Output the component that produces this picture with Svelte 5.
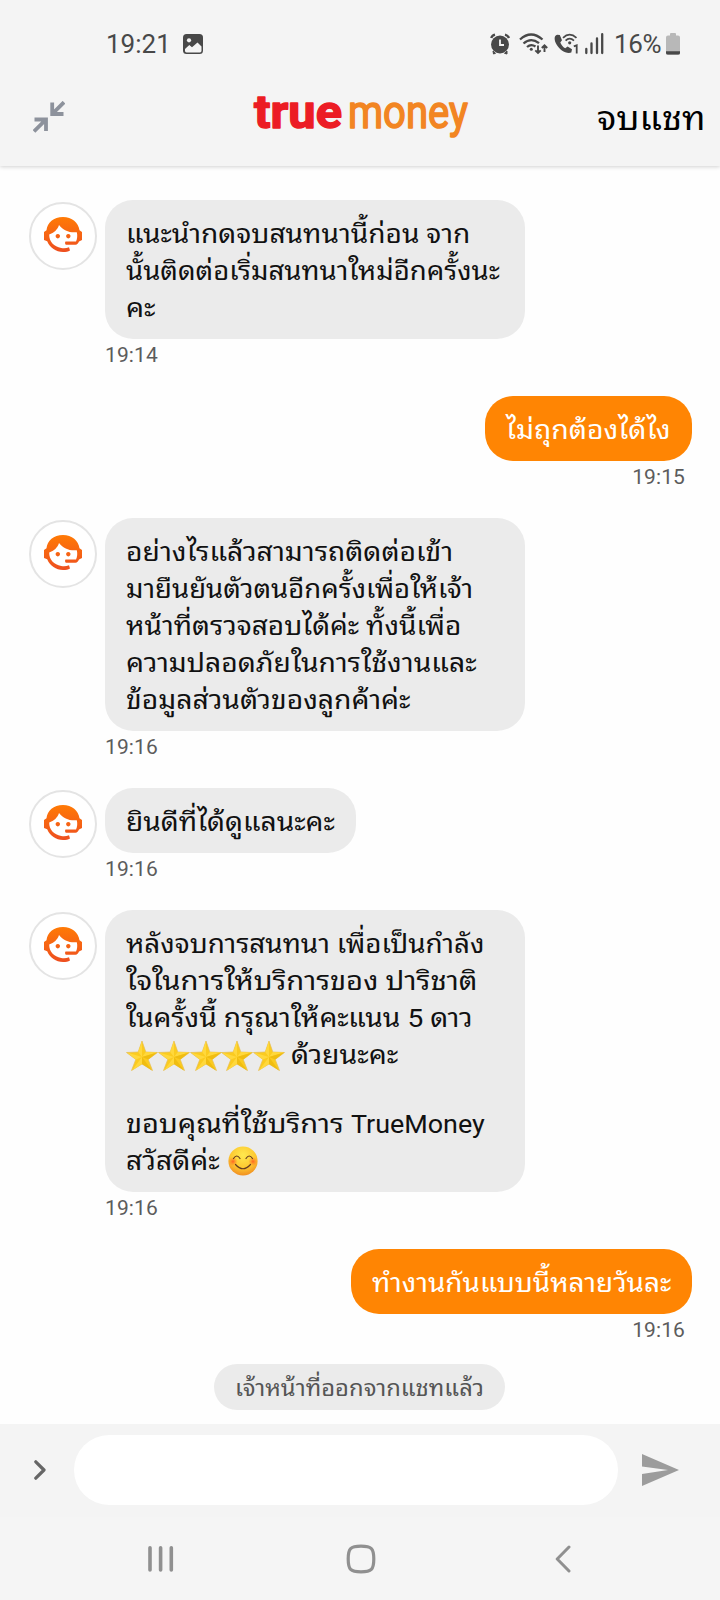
<script lang="ts">
  type Line = { text: string; width: number; latin?: string; latinWidth?: number; stars?: number; smile?: boolean };
  type Message = { id: number; from: 'agent' | 'me'; time: string; lines: (Line | null)[] };

  const messages: Message[] = [
    {
      id: 1,
      from: 'agent',
      time: '19:14',
      lines: [
        { text: 'แนะนำกดจบสนทนานี้ก่อน จาก', width: 344 },
        { text: 'นั้นติดต่อเริ่มสนทนาใหม่อีกครั้งนะ', width: 374 },
        { text: 'คะ', width: 30 },
      ],
    },
    { id: 2, from: 'me', time: '19:15', lines: [{ text: 'ไม่ถุกต้องได้ไง', width: 165 }] },
    {
      id: 3,
      from: 'agent',
      time: '19:16',
      lines: [
        { text: 'อย่างไรแล้วสามารถติดต่อเข้า', width: 327 },
        { text: 'มายืนยันตัวตนอีกครั้งเพื่อให้เจ้า', width: 347 },
        { text: 'หน้าที่ตรวจสอบได้ค่ะ ทั้งนี้เพื่อ', width: 335 },
        { text: 'ความปลอดภัยในการใช้งานและ', width: 351 },
        { text: 'ข้อมูลส่วนตัวของลูกค้าค่ะ', width: 285 },
      ],
    },
    { id: 4, from: 'agent', time: '19:16', lines: [{ text: 'ยินดีที่ได้ดูแลนะคะ', width: 209 }] },
    {
      id: 5,
      from: 'agent',
      time: '19:16',
      lines: [
        { text: 'หลังจบการสนทนา เพื่อเป็นกำลัง', width: 358 },
        { text: 'ใจในการให้บริการของ ปาริชาติ', width: 351 },
        { text: 'ในครั้งนี้ กรุณาให้คะแนน 5 ดาว', width: 347 },
        { text: 'ด้วยนะคะ', width: 107, stars: 5 },
        null,
        { text: 'ขอบคุณที่ใช้บริการ', width: 218, latin: 'TrueMoney', latinWidth: 134 },
        { text: 'สวัสดีค่ะ', width: 94, smile: true },
      ],
    },
    { id: 6, from: 'me', time: '19:16', lines: [{ text: 'ทำงานกันแบบนี้หลายวันละ', width: 299 }] },
  ];

  // squeezes or widens a line so it fills the width given for it
  function fit(node: HTMLElement, width: number) {
    const natural = node.scrollWidth;
    if (natural > 0) {
      node.style.transform = `scaleX(${width / natural})`;
    }
    node.style.width = `${width}px`;
  }
</script>

<div class="screen">
  <div class="status">
    <span class="clock">19:21</span>
    <svg class="photo" width="20" height="20" viewBox="0 0 20 20">
      <rect width="20" height="20" rx="3.5" fill="#484848" />
      <circle cx="6" cy="6.3" r="2.1" fill="#f4f4f4" />
      <path d="M2 15 L6.3 11 L9 13.3 L14.5 8.6 L18.5 12.5 V17 Q18.3 18.3 17 18.5 H3.5 Q2 18.3 2 17 Z" fill="#f4f4f4" />
    </svg>
    <svg class="indicators" width="116" height="24" viewBox="0 0 116 24">
      <g fill="#484848">
        <circle cx="10" cy="12.5" r="9" />
        <path d="M3 19 L5.5 21.3 L3.5 22 Z M17 19 L14.5 21.3 L17 22 Z" stroke="#484848" />
      </g>
      <path d="M1.2 6 Q2 3.4 5 2.6 M19 6 Q18 3.4 15 2.6" fill="none" stroke="#484848" stroke-width="2.3" />
      <path d="M10 7.5 V13 H14" fill="none" stroke="#f4f4f4" stroke-width="1.8" />
      <g fill="none" stroke="#484848" stroke-width="2.3">
        <path d="M30 7.5 Q41 -2.5 52.5 7.5" />
        <path d="M33.5 11.5 Q41 4.8 49 11.2" />
        <path d="M37 15 Q41 11.5 45.5 14.5" />
        <path d="M48 13.5 V21 M45.3 18.3 L48 21 L50.7 18.3 M54.5 20 V14 M51.8 16 L54.5 13.3 L57.2 16" stroke-width="1.9" />
      </g>
      <circle cx="41.3" cy="17.3" r="1.5" fill="#484848" />
      <path d="M67.2 2.7 C63.8 3.5 64 8.2 66.7 12.7 C69.6 17.6 75.8 22.3 81.3 20.6 L82 17.3 L77.6 14.4 L75.2 16.2 C72.8 14.7 71.4 13 70.3 10.4 L72 8.2 L69.8 3 Z" fill="#484848" />
      <g fill="none" stroke="#484848" stroke-width="1.8">
        <path d="M73 5.8 Q79.5 -0.5 86.5 5.8" />
        <path d="M75.6 8.7 Q79.5 4.7 84 8.6" />
        <path d="M83.8 14.3 L86.7 13.2 V21.5" />
      </g>
      <circle cx="79.7" cy="10.8" r="1.6" fill="#484848" />
      <path d="M96.3 17 V21 M101.5 11.5 V21 M107 6.5 V21 M112.2 2.2 V21" stroke="#484848" stroke-width="2.3" stroke-linecap="round" />
    </svg>
    <span class="percent">16%</span>
    <svg width="14" height="22" viewBox="0 0 14 22">
      <path d="M4 1 Q4 0 5 0 H9 Q10 0 10 1 V2.5 H12 Q14 2.5 14 4.5 V20 Q14 22 12 22 H2 Q0 22 0 20 V4.5 Q0 2.5 2 2.5 H4 Z" fill="#b8b8b8" />
      <path d="M0 18.3 H14 V20 Q14 21.5 12 21.5 H2 Q0 21.5 0 20 Z" fill="#484848" />
    </svg>
  </div>

  <header>
    <svg class="collapse" width="32" height="32" viewBox="0 0 32 32" fill="none" stroke="#8d929c" stroke-width="3.8">
      <path d="M19.2 1.5 V13 H30.5 M19.6 12.6 L31 1.2" />
      <path d="M1.5 18.5 H13 V30 M12.6 18.9 L1 30.4" />
    </svg>
    <svg class="logo" width="220" height="48" viewBox="0 0 220 48">
      <text x="2" y="32" class="true" textLength="88" lengthAdjust="spacingAndGlyphs">true</text>
      <text x="96" y="32" class="money" textLength="120" lengthAdjust="spacingAndGlyphs">money</text>
    </svg>
    <span class="end"><span class="fit" use:fit={109}>จบแชท</span></span>
  </header>

  <main>
    {#each messages as message (message.id)}
      <section class="message {message.from}">
        {#if message.from === 'agent'}
          <div class="avatar">
            <svg width="38" height="36" viewBox="0 0 38 36">
              <defs>
                <linearGradient id="hair-{message.id}" x1="0" y1="0" x2="0" y2="1">
                  <stop offset="0" stop-color="#ff7a05" />
                  <stop offset="1" stop-color="#ee4f20" />
                </linearGradient>
              </defs>
              <path
                d="M19 0 C9.5 0 3.3 5.8 2.5 13.2 L0 15 V23 L3.2 24.3 C6 31 12 35 19 35 C22 35 24.2 34.4 26 33.4 L25 30.2 C22.5 31.3 20 31.5 17.2 31 C10 29.8 5 24.5 5.2 17.5 C10 16 13.6 12.5 15 8 C19.5 13.5 25.5 16 32.8 15.2 C33.6 18.5 33.3 21.7 32 24.5 H21.5 C20.8 25.5 21 26.8 21.8 27.8 H31.5 C33.2 27.8 34.2 26.4 35 24.5 L38 23 V15 L35.5 13.2 C34.5 5.5 28 0 19 0 Z M13.8 17 a2.2 2.2 0 1 0 .01 0 Z M24.3 17 a2.2 2.2 0 1 0 .01 0 Z"
                fill="url(#hair-{message.id})"
              />
            </svg>
          </div>
        {/if}
        <div class="body">
          <div class="bubble">
            {#each message.lines as line}
              {#if line}
                <div class="line">
                  {#if line.stars}
                    {#each Array(line.stars) as _}
                      <svg class="star" width="32" height="32" viewBox="0 0 32 32">
                        <path d="M16 1 L19.8 12 L31.5 12.5 L22.2 19.4 L26.5 30.5 L16 24 L5.5 30.5 L9.8 19.4 L.5 12.5 L12.2 12 Z" fill="#fbcb1f" stroke="#e5bd55" stroke-width=".7" />
                        <path d="M16 1 V17 L12.2 12 Z M1 12.5 L16 17 L9.8 19.4 Z M16 17 V24 L6 30.5 Z M31 12.5 L16 17 L19.8 12 Z" fill="#ffd83c" />
                        <path d="M16 17 L31 12.5 L22.2 19.4 Z M16 17 L26 30.5 L16 24 Z" fill="#f0bd10" />
                      </svg>
                    {/each}
                  {/if}
                  <span class="fit" class:after-stars={line.stars} use:fit={line.width}>{line.text}</span>
                  {#if line.latin}
                    <span class="fit latin" use:fit={line.latinWidth ?? 0}>{line.latin}</span>
                  {/if}
                  {#if line.smile}
                    <svg class="smile" width="30" height="30" viewBox="0 0 30 30">
                      <defs>
                        <radialGradient id="face" cx=".5" cy=".3" r=".72">
                          <stop offset="0" stop-color="#ffe94f" />
                          <stop offset=".6" stop-color="#fdc830" />
                          <stop offset="1" stop-color="#f08a20" />
                        </radialGradient>
                        <radialGradient id="blush">
                          <stop offset="0" stop-color="#ff5a1f" stop-opacity=".9" />
                          <stop offset="1" stop-color="#ff7a2a" stop-opacity="0" />
                        </radialGradient>
                      </defs>
                      <circle cx="15" cy="15" r="14.6" fill="url(#face)" />
                      <circle cx="5" cy="15.5" r="4.6" fill="url(#blush)" />
                      <circle cx="25" cy="15.5" r="4.6" fill="url(#blush)" />
                      <path d="M5.5 12.5 Q8.8 7.5 12 12.5 M18 12.5 Q21.2 7.5 24.5 12.5 M7.5 18.5 Q15 27 22.5 18.5" fill="none" stroke="#663d20" stroke-width="1.2" stroke-linecap="round" />
                    </svg>
                  {/if}
                </div>
              {:else}
                <div class="blank"></div>
              {/if}
            {/each}
          </div>
          <time>{message.time}</time>
        </div>
      </section>
    {/each}
    <div class="notice"><span class="fit" use:fit={249}>เจ้าหน้าที่ออกจากแชทแล้ว</span></div>
  </main>

  <div class="composer">
    <svg class="expand" width="12" height="20" viewBox="0 0 12 20">
      <path d="M1.8 1.8 L10 10 L1.8 18.2" fill="none" stroke="#666" stroke-width="3.2" stroke-linecap="round" stroke-linejoin="round" />
    </svg>
    <div class="input"></div>
    <svg class="send" width="37" height="32" viewBox="0 0 37 32">
      <path d="M0 0 L37 16 L0 32 V20 L26 16 L0 12.5 Z" fill="#9c9c9c" />
    </svg>
  </div>

  <nav>
    <svg class="recents" width="26" height="28" viewBox="0 0 26 28" stroke="#909090" stroke-width="3.6" stroke-linecap="round">
      <path d="M2 2.8 V25 M12.6 2.8 V25 M23.3 2.8 V25" />
    </svg>
    <svg class="home" width="30" height="30" viewBox="0 0 30 30">
      <path d="M15 2.2 C25.5 2.2 27.8 4.5 27.8 15 C27.8 25.5 25.5 27.8 15 27.8 C4.5 27.8 2.2 25.5 2.2 15 C2.2 4.5 4.5 2.2 15 2.2 Z" fill="none" stroke="#909090" stroke-width="3.2" />
    </svg>
    <svg class="back" width="16" height="28" viewBox="0 0 16 28">
      <path d="M14 2 L2.2 14 L14 26" fill="none" stroke="#909090" stroke-width="3" stroke-linecap="round" stroke-linejoin="round" />
    </svg>
  </nav>
</div>

<style>
  :global(body) {
    margin: 0;
    background: #fefefe;
  }

  .screen {
    width: 720px;
    height: 1600px;
    display: flex;
    flex-direction: column;
    overflow: hidden;
    font-family: Roboto, 'Noto Sans Thai Looped', 'Noto Sans Thai UI', 'Droid Sans Thai', Loma, Waree, Garuda, sans-serif;
    color: #111;
  }

  .status {
    position: relative;
    z-index: 1;
    height: 76px;
    box-sizing: border-box;
    padding: 12px 40px 0 106px;
    display: flex;
    align-items: center;
    background: #f4f4f4;
    color: #484848;
    font-size: 26px;
  }

  .clock {
    width: 64px;
  }

  .photo {
    margin-left: 13px;
  }

  .indicators {
    margin-left: auto;
  }

  .percent {
    width: 50px;
    margin: 0 2px 0 8px;
    letter-spacing: -0.3px;
  }

  header {
    position: relative;
    height: 90px;
    box-sizing: border-box;
    padding: 0 14px 0 33px;
    display: flex;
    align-items: center;
    background: #f4f4f4;
    box-shadow: 0 1px 4px rgba(0, 0, 0, 0.18);
  }

  .collapse {
    margin-top: -8px;
  }

  .logo {
    margin: -3px 0 0 187px;
    overflow: visible;
  }

  .true {
    font-size: 46px;
    font-weight: 700;
    fill: #ec1c24;
    stroke: #ec1c24;
    stroke-width: 1.4;
    stroke-linejoin: round;
  }

  .money {
    font-size: 47px;
    font-weight: 400;
    fill: #f28522;
    stroke: #f28522;
    stroke-width: 1.6;
    stroke-linejoin: round;
  }

  .end {
    margin: -14px 0 0 auto;
    font-size: 34px;
    color: #000;
  }

  .fit {
    display: inline-block;
    flex: none;
    white-space: nowrap;
    transform-origin: left center;
  }

  main {
    height: 1258px;
    box-sizing: border-box;
    padding: 34px 28px 0 29px;
    display: flex;
    flex-direction: column;
  }

  .message {
    display: flex;
    align-items: flex-start;
    margin-bottom: 25px;
  }

  .avatar {
    width: 68px;
    height: 68px;
    box-sizing: border-box;
    margin: 2px 8px 0 0;
    padding: 13px 0 0 13px;
    border: 2px solid #e4e4e4;
    border-radius: 50%;
    background: #fff;
  }

  .avatar svg {
    display: block;
  }

  .body {
    display: flex;
    flex-direction: column;
    align-items: flex-start;
  }

  .bubble {
    max-width: 420px;
    box-sizing: border-box;
    padding: 15px 21px 13px;
    border-radius: 28px;
    background: #ebebeb;
    font-size: 26.5px;
  }

  .agent .bubble:has(.line + .line) {
    width: 420px;
  }

  .line {
    height: 37px;
    display: flex;
    align-items: center;
    line-height: 37px;
  }

  .blank {
    height: 32px;
  }

  .star {
    flex: none;
    margin-top: 2px;
  }

  .star + .star {
    margin-left: -0.2px;
  }

  .after-stars {
    margin-left: 6px;
  }

  .latin {
    margin-left: 7px;
  }

  .smile {
    margin-left: 8px;
  }

  time {
    height: 32px;
    line-height: 32px;
    font-size: 21px;
    letter-spacing: 0.1px;
    color: #5c5c5c;
  }

  .me {
    justify-content: flex-end;
  }

  .me .body {
    align-items: flex-end;
  }

  .me .bubble {
    background: #ff8503;
    color: #fff;
  }

  .me time {
    margin-right: 7px;
  }

  .notice {
    height: 46px;
    margin: -7px 0 0 185px;
    padding: 0 21px;
    align-self: flex-start;
    border-radius: 23px;
    background: #ebebeb;
    font-size: 23px;
    line-height: 49px;
    color: #555;
  }

  .composer {
    height: 93px;
    box-sizing: border-box;
    padding: 11px 41px 12px 34px;
    display: flex;
    align-items: center;
    background: #f4f4f4;
  }

  .input {
    width: 544px;
    height: 70px;
    margin: 0 24px 0 28px;
    border-radius: 35px;
    background: #fff;
  }

  nav {
    height: 83px;
    box-sizing: border-box;
    padding: 0 149px 0 148px;
    display: flex;
    align-items: center;
    background: #f5f5f5;
  }

  .home {
    margin-left: 172px;
  }

  .back {
    margin-left: auto;
  }
</style>
